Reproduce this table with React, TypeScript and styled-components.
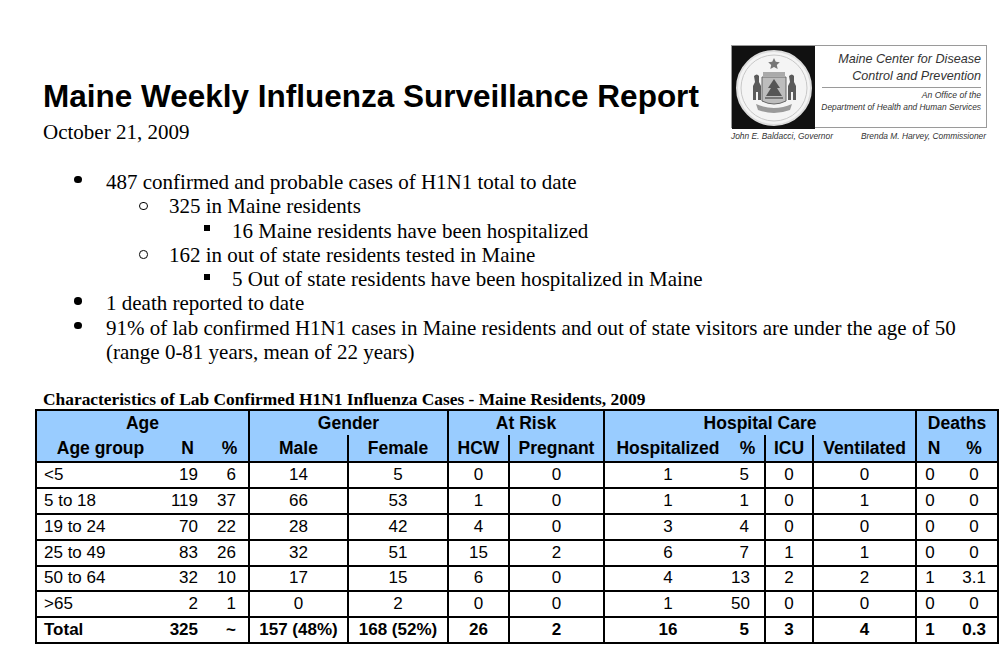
import React from 'react';
import styled, { createGlobalStyle } from 'styled-components';

const GlobalStyle = createGlobalStyle`
  html, body {
    margin: 0;
    padding: 0;
    background: #fff;
  }
  body {
    font-family: "Liberation Serif", "Times New Roman", serif;
    color: #000;
  }
`;

const Page = styled.div`
  width: 1007px;
  height: 652px;
  box-sizing: border-box;
  padding: 45px 10px 0 35px;
  overflow: hidden;
`;

const Header = styled.header`
  display: flex;
  justify-content: space-between;
  align-items: flex-start;
  padding: 0 10px 0 8px;
`;

const TitleBlock = styled.div`
  margin-top: 33px;
`;

const Title = styled.h1`
  margin: 0;
  font-family: "Liberation Sans", Arial, sans-serif;
  font-weight: 700;
  font-size: 31.5px;
  line-height: 36px;
`;

const DateLine = styled.div`
  margin-top: 6px;
  font-size: 21px;
  line-height: 24px;
`;

const LogoWrap = styled.div`
  width: 256px;
  display: flex;
  flex-direction: column;
`;

const LogoBox = styled.div`
  display: flex;
  height: 83px;
  border: 1px solid #9a9a9a;
  box-sizing: border-box;
`;

const LogoText = styled.div`
  flex: 1;
  padding: 5px 5px 0 5px;
  text-align: right;
  font-family: "Liberation Sans", Arial, sans-serif;
  font-style: italic;
  color: #333;
`;

const LogoLine = styled.div<{ $size: number; $lh: number }>`
  font-size: ${(p) => p.$size}px;
  line-height: ${(p) => p.$lh}px;
  white-space: nowrap;
`;

const LogoRule = styled.div`
  height: 1px;
  background: #9a9a9a;
  margin: 2px 0 1px 2px;
`;

const Signatures = styled.div`
  display: flex;
  justify-content: space-between;
  margin-top: 3px;
  padding-right: 1px;
  font-family: "Liberation Sans", Arial, sans-serif;
  font-style: italic;
  font-size: 8.4px;
  line-height: 10px;
  color: #333;
`;

const List = styled.ul`
  list-style: none;
  margin: 26px 0 0;
  padding: 0 0 0 8px;
  width: 935px;
`;

const indent = { 1: 29, 2: 95, 3: 161 } as const;
const markerWidth = { 1: 34, 2: 31, 3: 28 } as const;

const Item = styled.li<{ $level: 1 | 2 | 3 }>`
  display: flex;
  align-items: flex-start;
  padding-left: ${(p) => indent[p.$level]}px;
  font-size: 21px;
  line-height: 24.3px;
`;

const Marker = styled.span<{ $level: 1 | 2 | 3 }>`
  flex: 0 0 ${(p) => markerWidth[p.$level]}px;
  height: 24.3px;
  display: flex;
  align-items: center;
`;

const Dot = styled.span`
  width: 7.5px;
  height: 7.5px;
  border-radius: 50%;
  background: #000;
  margin: 0 0 5px 2px;
`;

const Ring = styled.span`
  width: 6.5px;
  height: 6.5px;
  border: 1px solid #000;
  border-radius: 50%;
  margin: 0 0 1px 1px;
`;

const Square = styled.span`
  width: 6px;
  height: 6px;
  background: #000;
  margin: 0 0 5px 0;
`;

const ItemText = styled.span`
  flex: 1;
`;

const Caption = styled.div`
  margin: 26px 0 1px 8px;
  font-weight: 700;
  font-size: 17.4px;
  line-height: 18px;
`;

const Table = styled.table`
  width: 962px;
  table-layout: fixed;
  border-collapse: collapse;
  border: 2px solid #000;
  font-family: "Liberation Sans", Arial, sans-serif;
  font-size: 17px;
`;

const GroupRow = styled.tr`
  background: #99ccff;
  height: 25px;
`;

const LabelRow = styled.tr`
  background: #99ccff;
  height: 27px;
`;

const DataRow = styled.tr<{ $total?: boolean }>`
  height: 25.8px;
  font-weight: ${(p) => (p.$total ? 700 : 400)};
`;

const Th = styled.th<{ $noLeft?: boolean }>`
  padding: 0;
  font-weight: 700;
  font-size: 17.5px;
  text-align: center;
  line-height: 20px;
  white-space: nowrap;
  border-left: ${(p) => (p.$noLeft ? 'none' : '2px solid #000')};
`;

type Align = 'left' | 'center' | 'right';

const Td = styled.td<{ $align: Align; $pl: number; $pr: number; $noLeft?: boolean }>`
  padding: 0 ${(p) => p.$pr}px 0 ${(p) => p.$pl}px;
  text-align: ${(p) => p.$align};
  line-height: 20px;
  white-space: nowrap;
  border-top: 2px solid #000;
  border-left: ${(p) => (p.$noLeft ? 'none' : '2px solid #000')};
`;

interface ColSpec {
  width: number;
  label: string;
  align: Align;
  pl: number;
  pr: number;
  noLeft?: boolean;
}

const columns: ColSpec[] = [
  { width: 128, label: 'Age group', align: 'left', pl: 7, pr: 0 },
  { width: 47, label: 'N', align: 'right', pl: 0, pr: 13, noLeft: true },
  { width: 38, label: '%', align: 'right', pl: 0, pr: 12, noLeft: true },
  { width: 99, label: 'Male', align: 'center', pl: 0, pr: 0 },
  { width: 100, label: 'Female', align: 'center', pl: 0, pr: 0 },
  { width: 61, label: 'HCW', align: 'center', pl: 0, pr: 0 },
  { width: 95, label: 'Pregnant', align: 'center', pl: 0, pr: 0 },
  { width: 127, label: 'Hospitalized', align: 'center', pl: 0, pr: 0 },
  { width: 34, label: '%', align: 'right', pl: 0, pr: 15, noLeft: true },
  { width: 48, label: 'ICU', align: 'center', pl: 0, pr: 0 },
  { width: 103, label: 'Ventilated', align: 'center', pl: 0, pr: 0 },
  { width: 35, label: 'N', align: 'center', pl: 0, pr: 8 },
  { width: 47, label: '%', align: 'center', pl: 0, pr: 0, noLeft: true },
];

const groups = [
  { label: 'Age', span: 3 },
  { label: 'Gender', span: 2 },
  { label: 'At Risk', span: 2 },
  { label: 'Hospital Care', span: 4 },
  { label: 'Deaths', span: 2 },
];

const rows: string[][] = [
  ['<5', '19', '6', '14', '5', '0', '0', '1', '5', '0', '0', '0', '0'],
  ['5 to 18', '119', '37', '66', '53', '1', '0', '1', '1', '0', '1', '0', '0'],
  ['19 to 24', '70', '22', '28', '42', '4', '0', '3', '4', '0', '0', '0', '0'],
  ['25 to 49', '83', '26', '32', '51', '15', '2', '6', '7', '1', '1', '0', '0'],
  ['50 to 64', '32', '10', '17', '15', '6', '0', '4', '13', '2', '2', '1', '3.1'],
  ['>65', '2', '1', '0', '2', '0', '0', '1', '50', '0', '0', '0', '0'],
];

const totals = ['Total', '325', '~', '157 (48%)', '168 (52%)', '26', '2', '16', '5', '3', '4', '1', '0.3'];

const bullets: { level: 1 | 2 | 3; text: string }[] = [
  { level: 1, text: '487 confirmed and probable cases of H1N1 total to date' },
  { level: 2, text: '325 in Maine residents' },
  { level: 3, text: '16 Maine residents have been hospitalized' },
  { level: 2, text: '162 in out of state residents tested in Maine' },
  { level: 3, text: '5 Out of state residents have been hospitalized in Maine' },
  { level: 1, text: '1 death reported to date' },
  {
    level: 1,
    text: '91% of lab confirmed H1N1 cases in Maine residents and out of state visitors are under the age of 50 (range 0-81 years, mean of 22 years)',
  },
];

// simplified state seal on the black square of the logo
const Seal = () => (
  <svg width="83" height="83" viewBox="0 0 83 83">
    <rect width="83" height="83" fill="#111" />
    <circle cx="42" cy="42" r="37" fill="#f4f4f4" />
    <circle cx="42" cy="42" r="33" fill="none" stroke="#c8c8c8" strokeWidth="1" />
    <path d="M42 12 l1.8 3.8 4 .4 -3 2.7 .9 4 -3.7 -2 -3.7 2 .9 -4 -3 -2.7 4 -.4z" fill="#777" />
    <path d="M31 26 h22 v4 h-22z" fill="#aaa" />
    <path d="M30 31 h24 v24 q-12 6 -24 0z" fill="#bdbdbd" stroke="#666" strokeWidth="1" />
    <path d="M42 33 l-6 9 h3 l-5 8 h16 l-5 -8 h3z" fill="#555" />
    <path d="M33 51 h18 v2 h-18z" fill="#777" />
    <path d="M22 30 q3 -3 5 0 v6 l2 4 v14 h-3 v-8 h-2 v8 h-3 v-14 l2 -4z" fill="#5a5a5a" />
    <path d="M57 30 q3 -3 5 0 v6 l2 4 v14 h-3 v-8 h-2 v8 h-3 v-14 l2 -4z" fill="#5a5a5a" />
    <path d="M24 58 q18 8 36 0 l-2 6 q-16 6 -32 0z" fill="#9a9a9a" />
    <circle cx="42" cy="42" r="37" fill="none" stroke="#ddd" strokeWidth="2" />
  </svg>
);

const BulletMarker = ({ level }: { level: 1 | 2 | 3 }) => (
  <Marker $level={level}>
    {level === 1 && <Dot />}
    {level === 2 && <Ring />}
    {level === 3 && <Square />}
  </Marker>
);

export default function App() {
  return (
    <>
      <GlobalStyle />
      <Page>
        <Header>
          <TitleBlock>
            <Title>Maine Weekly Influenza Surveillance Report</Title>
            <DateLine>October 21, 2009</DateLine>
          </TitleBlock>
          <LogoWrap>
            <LogoBox>
              <Seal />
              <LogoText>
                <LogoLine $size={12.6} $lh={17}>Maine Center for Disease</LogoLine>
                <LogoLine $size={12.6} $lh={17}>Control and Prevention</LogoLine>
                <LogoRule />
                <LogoLine $size={8.6} $lh={12}>An Office of the</LogoLine>
                <LogoLine $size={8.4} $lh={12}>Department of Health and Human Services</LogoLine>
              </LogoText>
            </LogoBox>
            <Signatures>
              <span>John E. Baldacci, Governor</span>
              <span>Brenda M. Harvey, Commissioner</span>
            </Signatures>
          </LogoWrap>
        </Header>

        <List>
          {bullets.map((b, i) => (
            <Item key={i} $level={b.level}>
              <BulletMarker level={b.level} />
              <ItemText>{b.text}</ItemText>
            </Item>
          ))}
        </List>

        <Caption>Characteristics of Lab Confirmed H1N1 Influenza Cases - Maine Residents, 2009</Caption>
        <Table>
          <colgroup>
            {columns.map((c, i) => (
              <col key={i} style={{ width: c.width }} />
            ))}
          </colgroup>
          <thead>
            <GroupRow>
              {groups.map((g, i) => (
                <Th key={g.label} colSpan={g.span} $noLeft={i === 0}>
                  {g.label}
                </Th>
              ))}
            </GroupRow>
            <LabelRow>
              {columns.map((c, i) => (
                <Th key={i} $noLeft={c.noLeft || i === 0}>
                  {c.label}
                </Th>
              ))}
            </LabelRow>
          </thead>
          <tbody>
            {rows.map((r, ri) => (
              <DataRow key={ri}>
                {r.map((v, ci) => {
                  const c = columns[ci];
                  return (
                    <Td key={ci} $align={c.align} $pl={c.pl} $pr={c.pr} $noLeft={c.noLeft || ci === 0}>
                      {v}
                    </Td>
                  );
                })}
              </DataRow>
            ))}
            <DataRow $total>
              {totals.map((v, ci) => {
                const c = columns[ci];
                return (
                  <Td key={ci} $align={c.align} $pl={c.pl} $pr={c.pr} $noLeft={c.noLeft || ci === 0}>
                    {v}
                  </Td>
                );
              })}
            </DataRow>
          </tbody>
        </Table>
      </Page>
    </>
  );
}
